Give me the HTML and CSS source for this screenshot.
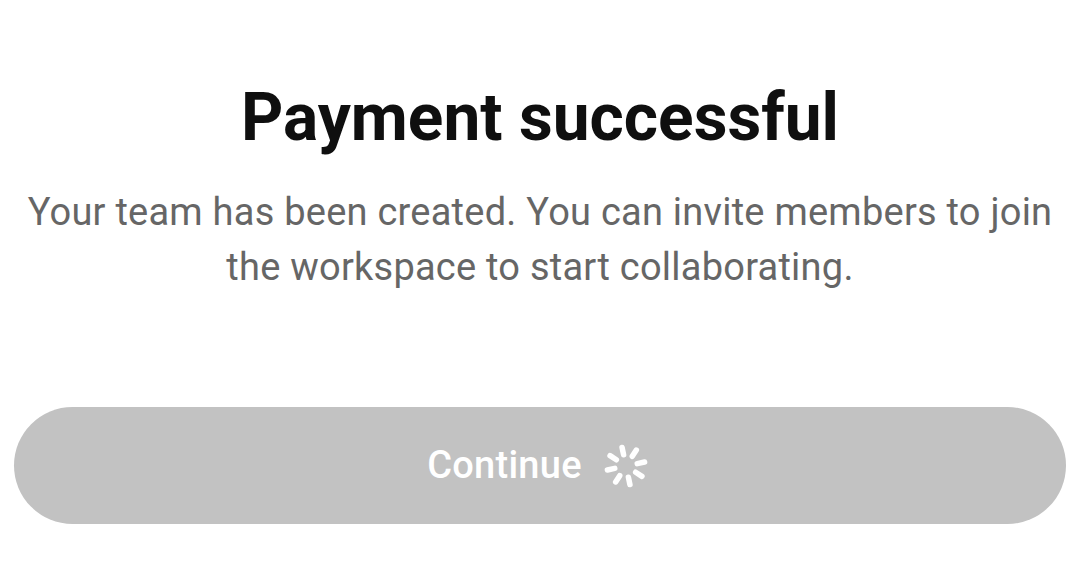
FILE: index.html
```html
<!DOCTYPE html>
<html>
<head>
    <meta charset="UTF-8">
    <title>Payment successful</title>
    <link rel="stylesheet" href="styles.css">
</head>
<body>
    <div class="wrap">
        <h1 class="title">Payment successful</h1>
        <p class="desc">Your team has been created. You can invite members to join the workspace to start collaborating.</p>
        <button class="btn">
            <span>Continue</span>
            <svg class="spinner" width="46" height="46" viewBox="-23 -23 46 46">
                <g stroke="#fff" stroke-width="5.5" stroke-linecap="round">
                    <line x1="0" y1="-11.5" x2="0" y2="-19" transform="rotate(-12)"/>
                    <line x1="0" y1="-11.5" x2="0" y2="-19" transform="rotate(33)"/>
                    <line x1="0" y1="-11.5" x2="0" y2="-19" transform="rotate(78)"/>
                    <line x1="0" y1="-11.5" x2="0" y2="-19" transform="rotate(123)"/>
                    <line x1="0" y1="-11.5" x2="0" y2="-19" transform="rotate(168)"/>
                    <line x1="0" y1="-11.5" x2="0" y2="-19" transform="rotate(213)"/>
                    <line x1="0" y1="-11.5" x2="0" y2="-19" transform="rotate(258)"/>
                    <line x1="0" y1="-11.5" x2="0" y2="-19" transform="rotate(303)"/>
                </g>
            </svg>
        </button>
    </div>
</body>
</html>
```

FILE: styles.css
```css
body{margin:0;background:#fff;font-family:Roboto,"Liberation Sans",sans-serif;}
h1,p{margin:0;}

.wrap{
    padding:79px 14px 0;
    text-align:center;
}
.title{
    font-size:65.8px;
    line-height:78px;
    font-weight:700;
    color:#0f0f0f;
}
.desc{
    margin-top:28px;
    font-size:38px;
    line-height:55px;
    letter-spacing:.24px;
    color:#666;
}
.btn{
    display:flex;
    align-items:center;
    justify-content:center;
    gap:21px;
    width:100%;
    height:117px;
    margin-top:112px;
    padding:0 4px 1px 0;
    border:none;
    border-radius:59px;
    background:#c2c2c2;
    color:#fff;
    font-family:inherit;
    font-size:38px;
    font-weight:500;
    letter-spacing:.25px;
}
.spinner{
    margin-top:1px;
}
```
